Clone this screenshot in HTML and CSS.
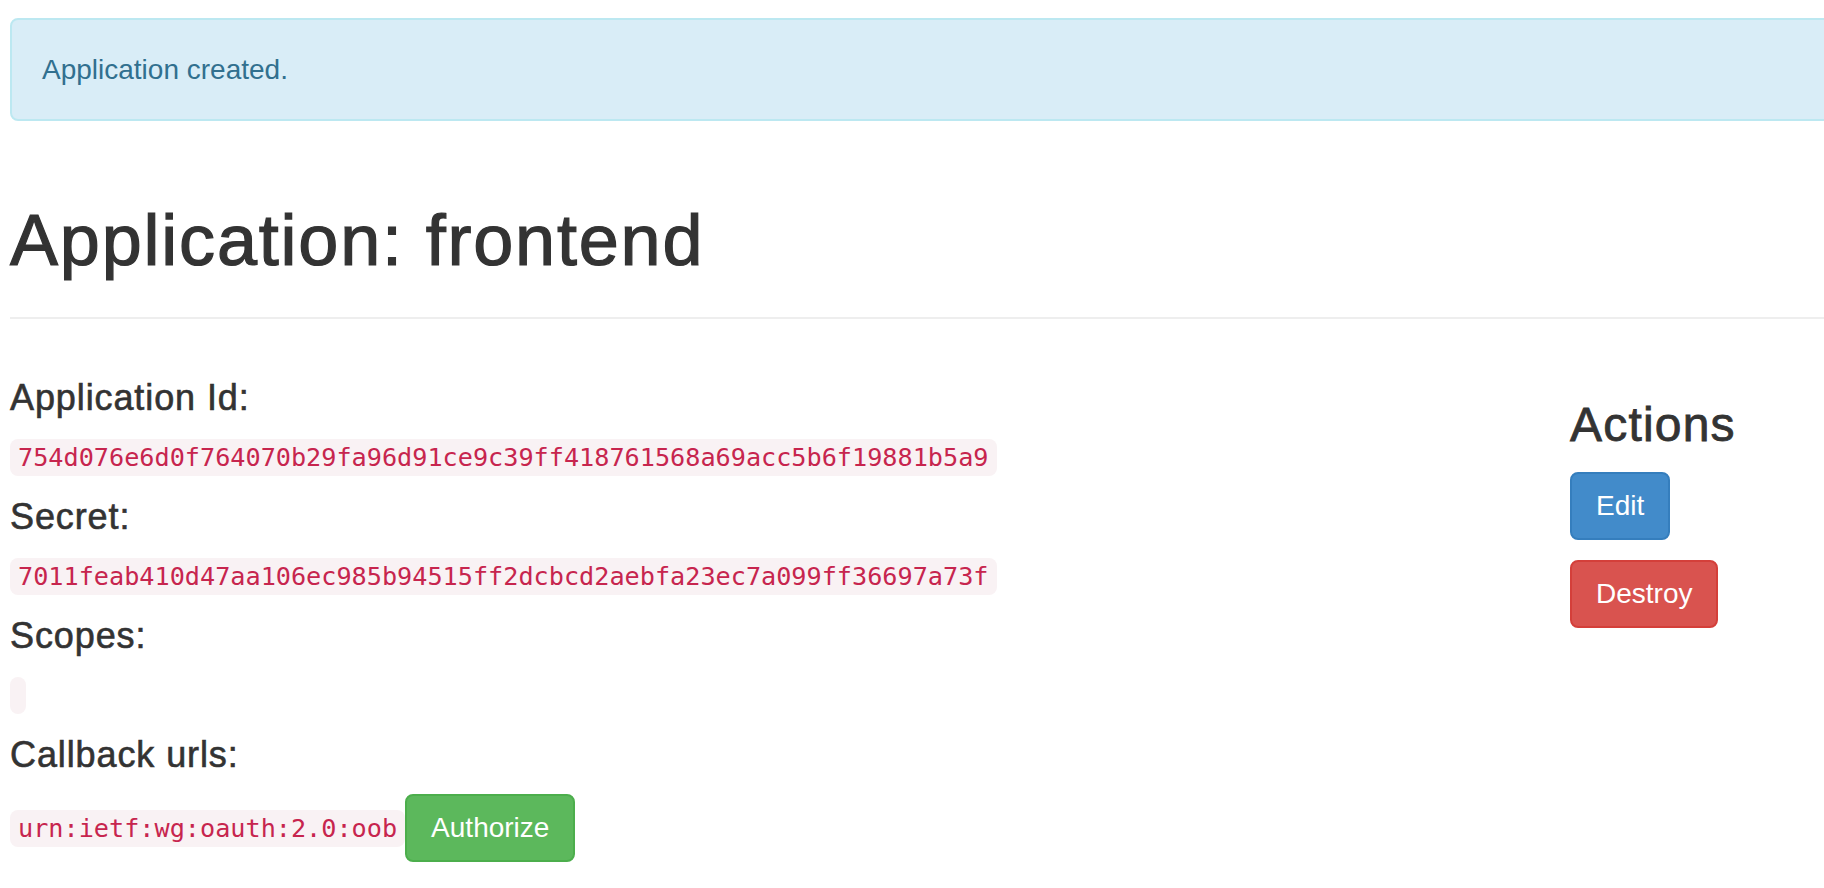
FILE: index.html
```html
<!DOCTYPE html>
<html lang="en">
<head>
<meta charset="utf-8">
<title>Application: frontend</title>
<link rel="stylesheet" href="styles.css">
</head>
<body>
<div class="container">
  <div class="alert alert-info">Application created.</div>

  <div class="page-header">
    <h1>Application: frontend</h1>
  </div>

  <div class="row">
    <div class="col-main">
      <h4>Application Id:</h4>
      <p><code>754d076e6d0f764070b29fa96d91ce9c39ff418761568a69acc5b6f19881b5a9</code></p>

      <h4>Secret:</h4>
      <p><code>7011feab410d47aa106ec985b94515ff2dcbcd2aebfa23ec7a099ff36697a73f</code></p>

      <h4>Scopes:</h4>
      <p><code></code></p>

      <h4>Callback urls:</h4>
      <table class="callbacks">
        <tr>
          <td><code>urn:ietf:wg:oauth:2.0:oob</code></td>
          <td><a class="btn btn-success" href="#">Authorize</a></td>
        </tr>
      </table>
    </div>

    <div class="col-side">
      <h3>Actions</h3>
      <div class="action"><a class="btn btn-primary" href="#">Edit</a></div>
      <div class="action"><form class="button-to"><button type="button" class="btn btn-danger">Destroy</button></form></div>
    </div>
  </div>
</div>
</body>
</html>
```

FILE: styles.css
```css
html, body {
  overflow: hidden;
}

body {
  margin: 0;
  background: #fff;
  color: #333;
  font-family: "Liberation Sans", Arial, Helvetica, sans-serif;
  font-size: 28px;
  line-height: 40px;
}

*, *::before, *::after {
  box-sizing: border-box;
}

.container {
  width: 2280px;
  margin-left: 10px;
  padding-top: 18px;
}

.alert {
  padding: 30px;
  border: 2px solid transparent;
  border-radius: 8px;
  margin: 0;
  height: 103px;
}

.alert-info {
  background: #d9edf7;
  border-color: #bce8f1;
  color: #31708f;
}

.page-header {
  margin: 80px 0 40px;
  padding-bottom: 18px;
  border-bottom: 2px solid #eee;
}

h1, h3, h4 {
  font-weight: 500;
  color: #333;
  line-height: 1.1;
  letter-spacing: 0.025em;
  -webkit-text-stroke: 0.017em #333;
}

h1 {
  font-size: 72px;
  margin: 0 0 19px;
}

h3 {
  font-size: 48px;
  margin: 40px 0 20px;
}

h4 {
  font-size: 36px;
  line-height: 38px;
  margin: 20px 0;
}

p {
  margin: 0 0 20px;
}

.row {
  display: flex;
  margin: 0 -30px;
}

.col-main {
  width: 1560px;
  padding: 0 30px;
}

.col-side {
  width: 780px;
  padding: 0 30px;
}

code {
  font-family: "DejaVu Sans Mono", Menlo, Monaco, Consolas, monospace;
  font-size: 25.2px;
  padding: 4px 8px;
  color: #c7254e;
  background: #f9f2f4;
  border-radius: 8px;
}

.callbacks {
  border-collapse: collapse;
  border-spacing: 0;
}

.callbacks td {
  padding: 0;
  vertical-align: middle;
}

.btn {
  display: inline-block;
  padding: 12px 24px;
  font-family: inherit;
  font-size: 28px;
  line-height: 40px;
  font-weight: 400;
  text-align: center;
  white-space: nowrap;
  vertical-align: middle;
  border: 2px solid transparent;
  border-radius: 8px;
  color: #fff;
  text-decoration: none;
  cursor: pointer;
}

.btn-success {
  background: #5cb85c;
  border-color: #4cae4c;
}

.btn-primary {
  background: #428bca;
  border-color: #357ebd;
}

.btn-danger {
  background: #d9534f;
  border-color: #d43f3a;
}

.action {
  display: flex;
  margin-bottom: 20px;
}

.button-to {
  display: flex;
  margin: 0;
}
```
